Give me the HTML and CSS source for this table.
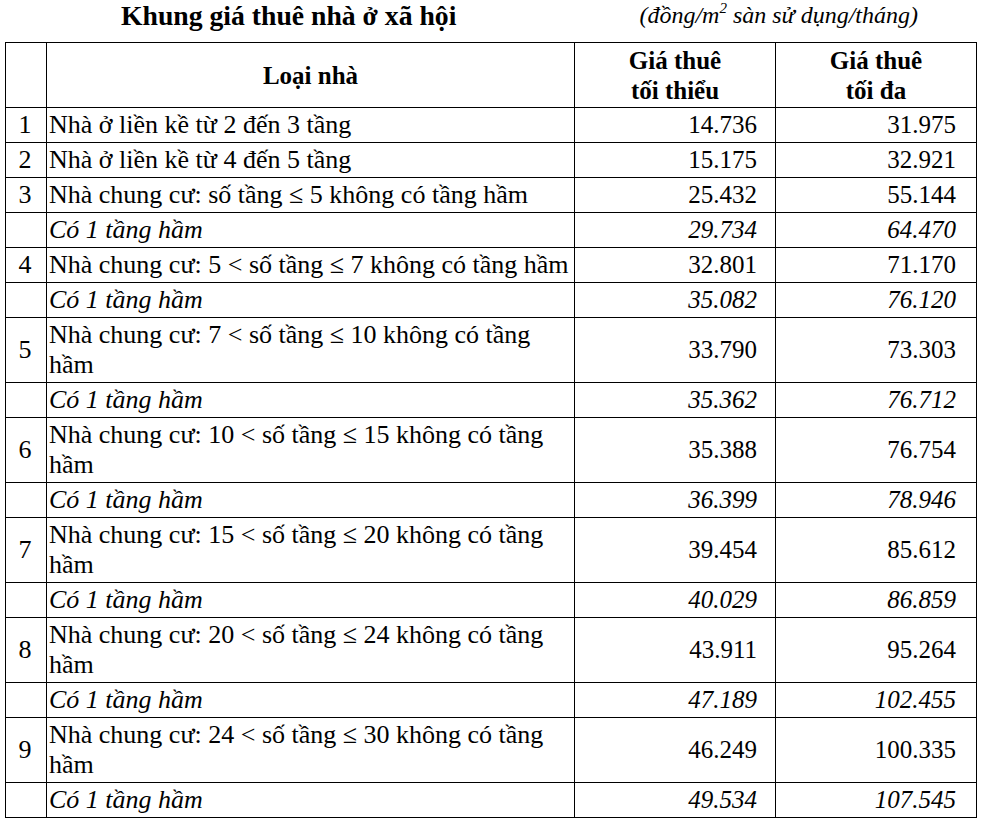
FILE: index.html
```html
<!DOCTYPE html>
<html lang="vi">
<head>
<meta charset="utf-8">
<title>Khung giá thuê nhà ở xã hội</title>
<link rel="stylesheet" href="styles.css">
</head>
<body>
<div class="head">
  <h1 class="title">Khung giá thuê nhà ở xã hội</h1>
  <p class="unit">(đồng/m<sup>2</sup> sàn sử dụng/tháng)</p>
</div>
<table class="grid">
  <colgroup>
    <col class="c-no"><col class="c-type"><col class="c-min"><col class="c-max">
  </colgroup>
  <thead>
    <tr>
      <th></th>
      <th class="h-type">Loại nhà</th>
      <th>Giá thuê<br>tối thiểu</th>
      <th>Giá thuê<br>tối đa</th>
    </tr>
  </thead>
  <tbody>
    <tr><td class="no">1</td><td class="type">Nhà ở liền kề từ 2 đến 3 tầng</td><td class="num">14.736</td><td class="num last">31.975</td></tr>
    <tr><td class="no">2</td><td class="type">Nhà ở liền kề từ 4 đến 5 tầng</td><td class="num">15.175</td><td class="num last">32.921</td></tr>
    <tr><td class="no">3</td><td class="type">Nhà chung cư: số tầng ≤ 5 không có tầng hầm</td><td class="num">25.432</td><td class="num last">55.144</td></tr>
    <tr class="sub"><td class="no"></td><td class="type">Có 1 tầng hầm</td><td class="num">29.734</td><td class="num last">64.470</td></tr>
    <tr><td class="no">4</td><td class="type">Nhà chung cư: 5 &lt; số tầng ≤ 7 không có tầng hầm</td><td class="num">32.801</td><td class="num last">71.170</td></tr>
    <tr class="sub"><td class="no"></td><td class="type">Có 1 tầng hầm</td><td class="num">35.082</td><td class="num last">76.120</td></tr>
    <tr><td class="no">5</td><td class="type">Nhà chung cư: 7 &lt; số tầng ≤ 10 không có tầng<br>hầm</td><td class="num">33.790</td><td class="num last">73.303</td></tr>
    <tr class="sub"><td class="no"></td><td class="type">Có 1 tầng hầm</td><td class="num">35.362</td><td class="num last">76.712</td></tr>
    <tr><td class="no">6</td><td class="type">Nhà chung cư: 10 &lt; số tầng ≤ 15 không có tầng<br>hầm</td><td class="num">35.388</td><td class="num last">76.754</td></tr>
    <tr class="sub"><td class="no"></td><td class="type">Có 1 tầng hầm</td><td class="num">36.399</td><td class="num last">78.946</td></tr>
    <tr><td class="no">7</td><td class="type">Nhà chung cư: 15 &lt; số tầng ≤ 20 không có tầng<br>hầm</td><td class="num">39.454</td><td class="num last">85.612</td></tr>
    <tr class="sub"><td class="no"></td><td class="type">Có 1 tầng hầm</td><td class="num">40.029</td><td class="num last">86.859</td></tr>
    <tr><td class="no">8</td><td class="type">Nhà chung cư: 20 &lt; số tầng ≤ 24 không có tầng<br>hầm</td><td class="num">43.911</td><td class="num last">95.264</td></tr>
    <tr class="sub"><td class="no"></td><td class="type">Có 1 tầng hầm</td><td class="num">47.189</td><td class="num last">102.455</td></tr>
    <tr><td class="no">9</td><td class="type">Nhà chung cư: 24 &lt; số tầng ≤ 30 không có tầng<br>hầm</td><td class="num">46.249</td><td class="num last">100.335</td></tr>
    <tr class="sub"><td class="no"></td><td class="type">Có 1 tầng hầm</td><td class="num">49.534</td><td class="num last">107.545</td></tr>
  </tbody>
</table>
</body>
</html>
```
FILE: styles.css
```css
html, body {
  margin: 0;
  padding: 0;
  background: #fff;
  color: #000;
  font-family: "Liberation Serif", "Times New Roman", serif;
}

.head {
  display: flex;
  align-items: flex-start;
  height: 42px;
}

.title {
  margin: 0;
  padding: 1px 0 0 121px;
  font-size: 27.7px;
  line-height: 30px;
  font-weight: bold;
  white-space: nowrap;
}

.unit {
  margin: 0 0 0 auto;
  padding: 2px 64px 0 0;
  font-size: 24px;
  line-height: 26px;
  font-style: italic;
  white-space: nowrap;
}

.unit sup {
  font-size: 15px;
  line-height: 0;
  vertical-align: 10px;
}

.grid {
  margin-left: 5px;
  width: 971px;
  border-collapse: collapse;
  table-layout: fixed;
  font-family: "Liberation Serif", "Times New Roman", serif;
  font-size: 26px;
  line-height: 30px;
}

.c-no { width: 41px; }
.c-type { width: 528px; }
.c-min { width: 201px; }
.c-max { width: 201px; }

.grid th,
.grid td {
  border: 1px solid #000;
  padding: 2px 0;
  vertical-align: middle;
}

.grid th {
  font-size: 25px;
  font-weight: bold;
  text-align: center;
  height: 61px;
  padding: 2px 0 1px;
}

.grid td.no {
  text-align: center;
  padding-right: 2px;
}

.grid td.type {
  text-align: left;
  padding-left: 2px;
  vertical-align: top;
}

.grid td.num {
  font-size: 25px;
  text-align: right;
  padding-right: 18px;
}

.grid td.last {
  padding-right: 20px;
}

.grid tr.sub td {
  font-style: italic;
}
```
